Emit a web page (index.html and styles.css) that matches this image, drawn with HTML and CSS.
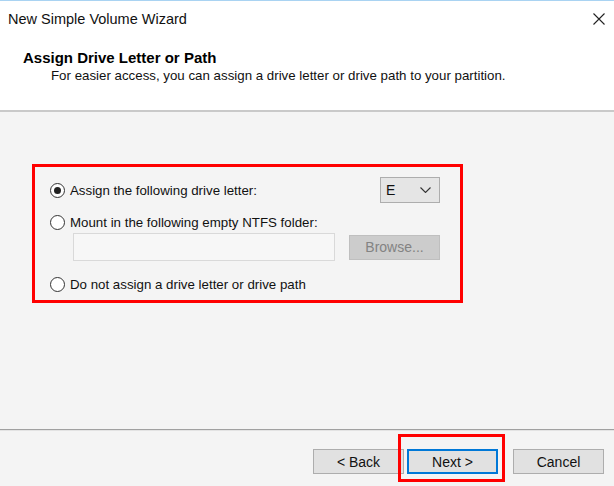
FILE: index.html
```html
<!DOCTYPE html>
<html lang="en">
<head>
  <meta charset="UTF-8" />
  <title>New Simple Volume Wizard</title>
  <link rel="stylesheet" href="styles.css">
</head>
<body>
  <div class="wizard">

    <!-- Header -->
    <div class="header">
      <div class="titlebar">
        <span class="title">New Simple Volume Wizard</span>
        <span class="close">
          <svg width="12" height="12" viewBox="0 0 12 12"><path d="M0.5 0.5 L11.5 11.5 M11.5 0.5 L0.5 11.5" stroke="#222" stroke-width="1.1" fill="none"/></svg>
        </span>
      </div>
      <div class="page-title">Assign Drive Letter or Path</div>
      <div class="page-desc">For easier access, you can assign a drive letter or drive path to your partition.</div>
    </div>

    <!-- Options -->
    <div class="content">
      <div class="options highlight">
        <div class="option-row">
          <span class="radio checked"></span>
          <span class="label">Assign the following drive letter:</span>
          <span class="dropdown">
            <span>E</span>
            <svg width="11" height="6" viewBox="0 0 11 6"><path d="M0.5 0.5 L5.5 5.5 L10.5 0.5" stroke="#333" stroke-width="1.1" fill="none"/></svg>
          </span>
        </div>
        <div class="option-row">
          <span class="radio"></span>
          <span class="label">Mount in the following empty NTFS folder:</span>
        </div>
        <div class="folder-row">
          <span class="textbox"></span>
          <span class="browse">Browse...</span>
        </div>
        <div class="option-row last">
          <span class="radio"></span>
          <span class="label">Do not assign a drive letter or drive path</span>
        </div>
      </div>
    </div>

    <!-- Buttons -->
    <div class="footer">
      <button class="btn">&lt; Back</button>
      <span class="highlight next-wrap"><button class="btn default">Next &gt;</button></span>
      <button class="btn">Cancel</button>
    </div>

  </div>
</body>
</html>
```

FILE: styles.css
```css
* {
  box-sizing: border-box;
}
body, html {
  margin: 0;
  padding: 0;
  font-family: 'Liberation Sans', Arial, sans-serif;
  color: #000;
}

.wizard {
  width: 614px;
  height: 486px;
  display: flex;
  flex-direction: column;
  background: #f4f4f4;
  overflow: hidden;
}

.header {
  background: #ffffff;
  border-top: 1px solid #a9d3f2;
  border-bottom: 2px solid #c9c9c9;
  height: 112px;
}
.titlebar {
  display: flex;
  justify-content: space-between;
  align-items: center;
  height: 36px;
  padding: 0 8px 0 8px;
}
.title {
  font-size: 14.5px;
  color: #111;
}
.close {
  display: flex;
  margin-right: 1px;
}
.page-title {
  font-weight: bold;
  font-size: 15px;
  padding: 12px 0 0 23px;
}
.page-desc {
  font-size: 13.3px;
  padding: 2px 0 0 51px;
  color: #111;
}

.content {
  flex: 1;
  padding: 52px 0 0 32px;
  border-bottom: 1px solid #a0a0a0;
}
.highlight {
  border: 3px solid #ff0000;
}
.options {
  width: 431px;
  height: 139px;
  padding: 10px 20px 0 15px;
}
.option-row {
  display: flex;
  align-items: center;
  height: 26px;
  font-size: 13.3px;
  color: #111;
}
.option-row + .option-row {
  margin-top: 6px;
}
.option-row.last {
  margin-top: 10px;
}
.radio {
  width: 15px;
  height: 15px;
  border: 1px solid #333;
  border-radius: 50%;
  background: #fff;
  margin-right: 5px;
  display: flex;
  align-items: center;
  justify-content: center;
}
.radio.checked::after {
  content: "";
  width: 7px;
  height: 7px;
  border-radius: 50%;
  background: #222;
}
.label {
  flex: 1;
}
.dropdown {
  width: 60px;
  height: 26px;
  border: 1px solid #adadad;
  background: #e5e5e5;
  display: flex;
  align-items: center;
  justify-content: space-between;
  padding: 0 8px 0 5px;
  font-size: 14px;
}

.folder-row {
  display: flex;
  align-items: center;
  justify-content: space-between;
  padding-left: 23px;
  margin-top: -2px;
}
.textbox {
  width: 262px;
  height: 28px;
  border: 1px solid #d9d9d9;
  background: #f7f7f7;
}
.browse {
  width: 91px;
  height: 25px;
  border: 1px solid #bfbfbf;
  background: #cccccc;
  color: #838383;
  font-size: 14px;
  display: flex;
  align-items: center;
  justify-content: center;
}

.footer {
  height: 56px;
  border-top: 1px solid #e3e3e3;
  display: flex;
  align-items: flex-start;
  padding: 18px 0 0 313px;
}
.btn {
  width: 91px;
  height: 25px;
  border: 1px solid #adadad;
  background: #e1e1e1;
  font-family: 'Liberation Sans', Arial, sans-serif;
  font-size: 14px;
  color: #111;
  padding: 0;
}
.next-wrap {
  display: flex;
  padding: 12px 4px 5px 6px;
  margin: -15px 8px 0 -6px;
}
.btn.default {
  border: 2px solid #0078d7;
}
```
